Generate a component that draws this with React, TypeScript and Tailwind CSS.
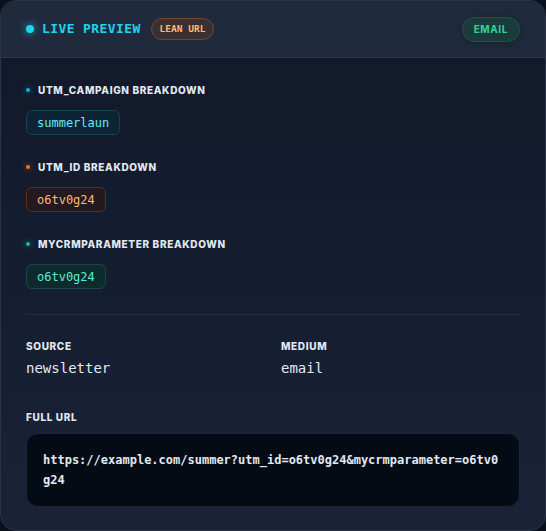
import React from 'react';

const mono = "font-['DejaVu_Sans_Mono',monospace]";
const sans = "font-['Inter',sans-serif]";

type Breakdown = {
  label: string;
  value: string;
  dot: string;
  chip: string;
};

const breakdowns: Breakdown[] = [
  {
    label: 'utm_campaign breakdown',
    value: 'summerlaun',
    dot: 'bg-[#06b6d4] shadow-[0_0_6px_rgba(6,182,212,0.8)]',
    chip: 'bg-[#0c2434] border-[#15425a] text-[#67e8f9]',
  },
  {
    label: 'utm_id breakdown',
    value: 'o6tv0g24',
    dot: 'bg-[#f97316] shadow-[0_0_6px_rgba(249,115,22,0.8)]',
    chip: 'bg-[#24191d] border-[#58301f] text-[#fdba74]',
  },
  {
    label: 'mycrmparameter breakdown',
    value: 'o6tv0g24',
    dot: 'bg-[#14b8a6] shadow-[0_0_6px_rgba(20,184,166,0.8)]',
    chip: 'bg-[#0d2a2d] border-[#17494a] text-[#5eead4]',
  },
];

function Label({ children }: { children: React.ReactNode }) {
  return (
    <div className={`${sans} text-[10px] leading-[14px] font-extrabold uppercase tracking-[0.065em] text-[#e2e8f0]`}>
      {children}
    </div>
  );
}

export default function App() {
  return (
    <div className="w-[546px] h-[531px] bg-[#0a101c]">
      <div className="w-full h-full rounded-2xl border border-[#2a3446] overflow-hidden flex flex-col bg-gradient-to-b from-[#101829] to-[#1a2237]">
        {/* header */}
        <div className="h-[57px] shrink-0 flex items-center justify-between px-[25px] bg-[#1f2a3c] border-b border-[#2c374a]">
          <div className="flex items-center">
            <span className="w-2 h-2 rounded-full bg-[#22d3ee] shadow-[0_0_8px_rgba(34,211,238,0.8)]" />
            <span className={`${mono} ml-2 text-[13px] font-bold tracking-[0.03em] text-[#22d3ee]`}>
              LIVE PREVIEW
            </span>
            <span className={`${mono} ml-2.5 h-[22px] flex items-center px-2 rounded-full border border-[#74472b] bg-[#3a2f31] text-[9.5px] font-bold text-[#fdba74]`}>
              LEAN URL
            </span>
          </div>
          <span className={`${sans} h-[25px] flex items-center px-[11px] rounded-full border border-[#1f5547] bg-[#1a3a3b] text-[10px] font-bold tracking-[0.06em] text-[#34d399] shadow-[0_2px_8px_rgba(0,0,0,0.25)]`}>
            EMAIL
          </span>
        </div>

        {/* body */}
        <div className="flex-1 px-[25px] pt-[25px] flex flex-col">
          <div className="flex flex-col gap-[25px]">
            {breakdowns.map((b) => (
              <div key={b.label}>
                <div className="flex items-center gap-2">
                  <span className={`w-1 h-1 rounded-full ${b.dot}`} />
                  <Label>{b.label}</Label>
                </div>
                <div
                  className={`${mono} mt-[13px] inline-flex items-center h-[25px] px-2.5 rounded-md border text-[12px] ${b.chip}`}
                >
                  {b.value}
                </div>
              </div>
            ))}
          </div>

          <div className="mt-[25px] border-t border-[#222c3e]" />

          <div className="mt-[24px] grid grid-cols-2 gap-4">
            <div>
              <Label>Source</Label>
              <div className={`${mono} mt-[5px] text-[14px] leading-5 text-[#e2e8f0]`}>newsletter</div>
            </div>
            <div>
              <Label>Medium</Label>
              <div className={`${mono} mt-[5px] text-[14px] leading-5 text-[#e2e8f0]`}>email</div>
            </div>
          </div>

          <div className="mt-[32px]">
            <Label>Full URL</Label>
            <div className="mt-[9px] rounded-xl border border-[#1c2636] bg-[#050b15] px-4 py-4">
              <p className={`${mono} text-[12px] leading-5 font-semibold text-[#e2e8f0] break-all`}>
                https://example.com/summer?utm_id=o6tv0g24&amp;mycrmparameter=o6tv0g24
              </p>
            </div>
          </div>
        </div>
      </div>
    </div>
  );
}
